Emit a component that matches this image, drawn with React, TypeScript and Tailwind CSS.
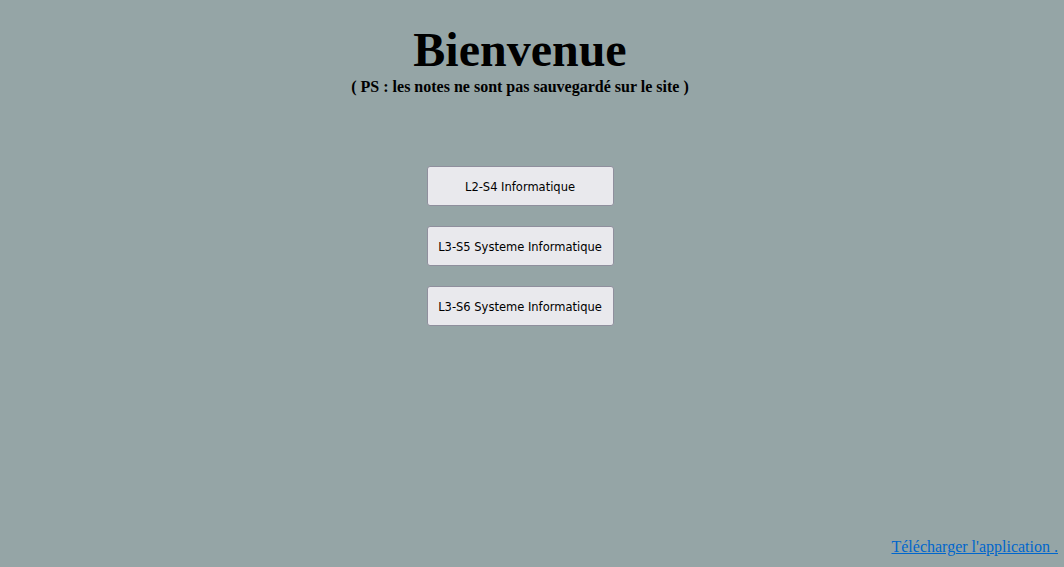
export default function App() {
  const courses = [
    "L2-S4 Informatique",
    "L3-S5 Systeme Informatique",
    "L3-S6 Systeme Informatique",
  ];
  return (
    <div className="relative h-[567px] w-full bg-[#95a5a6] font-['Liberation_Serif',serif] text-black">
      <div className="flex flex-col items-center pr-[24px] pt-[22px]">
        <h1 className="text-[48px] font-bold leading-[55px]">Bienvenue</h1>
        <p className="text-[16px] font-bold leading-[18px] mt-[1px]">
          ( PS : les notes ne sont pas sauvegardé sur le site )
        </p>
        <div className="mt-[70px] flex flex-col gap-[20px]">
          {courses.map((c) => (
            <button
              key={c}
              className="h-[40px] w-[187px] rounded-[3px] border border-[#8f8f9d] bg-[#e9e9ed] pt-[3px] font-['DejaVu_Sans',sans-serif] text-[11.5px] text-black"
            >
              {c}
            </button>
          ))}
        </div>
      </div>
      <a
        href="#"
        className="absolute bottom-[8px] right-[6px] text-[16px] text-[#0066cc] underline"
      >
        Télécharger l'application .
      </a>
    </div>
  );
}
